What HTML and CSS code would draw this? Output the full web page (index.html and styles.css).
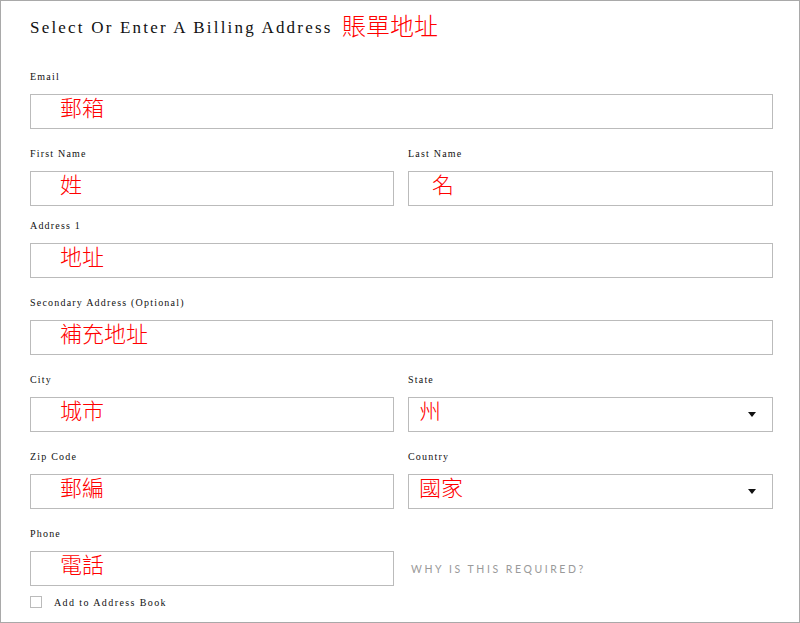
FILE: index.html
```html
<!DOCTYPE html>
<html lang="en">
<head>
    <meta charset="UTF-8">
    <meta name="viewport" content="width=device-width, initial-scale=1.0">
    <title>Billing Address</title>
    <link rel="stylesheet" href="styles.css">
</head>
<body>

<div class="page">
    <h2 class="title">Select Or Enter A Billing Address <span class="note note-title">賬單地址</span></h2>

    <!-- Billing address form -->
    <div class="field">
        <label>Email</label>
        <div class="box"><span class="note">郵箱</span></div>
    </div>

    <div class="row row-tight">
        <div class="field">
            <label>First Name</label>
            <div class="box"><span class="note">姓</span></div>
        </div>
        <div class="field">
            <label>Last Name</label>
            <div class="box box-last"><span class="note">名</span></div>
        </div>
    </div>

    <div class="field">
        <label>Address 1</label>
        <div class="box"><span class="note">地址</span></div>
    </div>

    <div class="field">
        <label>Secondary Address (Optional)</label>
        <div class="box"><span class="note">補充地址</span></div>
    </div>

    <div class="row">
        <div class="field">
            <label>City</label>
            <div class="box"><span class="note">城市</span></div>
        </div>
        <div class="field">
            <label>State</label>
            <div class="box box-select"><span class="note">州</span><span class="arrow"></span></div>
        </div>
    </div>

    <div class="row">
        <div class="field">
            <label>Zip Code</label>
            <div class="box"><span class="note">郵編</span></div>
        </div>
        <div class="field">
            <label>Country</label>
            <div class="box box-select"><span class="note">國家</span><span class="arrow"></span></div>
        </div>
    </div>

    <div class="row row-last">
        <div class="field">
            <label>Phone</label>
            <div class="box"><span class="note">電話</span></div>
        </div>
        <div class="why">WHY IS THIS REQUIRED?</div>
    </div>

    <div class="check-row">
        <span class="checkbox"></span>
        <span class="check-label">Add to Address Book</span>
    </div>
</div>

</body>
</html>
```

FILE: styles.css
```css
body {
    margin: 0;
    background-color: white;
    font-family: "Liberation Serif", "Times New Roman", serif;
    color: #111;
}

.page {
    height: 623px;
    box-sizing: border-box;
    border: 1px solid #a9a9a9;
    padding: 0 26px 0 29px;
}

.title {
    margin: 10px 0 35px;
    height: 24px;
    line-height: 24px;
    font-size: 17px;
    font-weight: normal;
    letter-spacing: 2.2px;
    white-space: nowrap;
}

.note {
    font-family: "Noto Sans CJK TC", sans-serif;
    font-weight: 300;
    color: #ff0000;
    font-size: 22px;
    letter-spacing: 0;
    line-height: 1;
}

.note-title {
    font-size: 24px;
    margin-left: 3px;
    position: relative;
    top: 2px;
}

.field {
    margin-bottom: 18px;
}

.field label {
    display: block;
    font-size: 10px;
    line-height: 14px;
    letter-spacing: 1.2px;
    margin-bottom: 10px;
}

.row {
    display: grid;
    grid-template-columns: 364px 1fr;
    column-gap: 14px;
}

.row-tight .field {
    margin-bottom: 13px;
}

.row-last .field {
    margin-bottom: 10px;
}

.box {
    height: 35px;
    box-sizing: border-box;
    border: 1px solid #bbbbbb;
    display: flex;
    align-items: center;
    padding: 0 0 11px 29px;
}

.box-last {
    padding-left: 23px;
}

.box-select {
    padding-left: 10px;
    padding-right: 16px;
    justify-content: space-between;
}

.arrow {
    width: 0;
    height: 0;
    border-left: 4px solid transparent;
    border-right: 4px solid transparent;
    border-top: 5px solid #111;
    margin-top: 11px;
}

.why {
    align-self: end;
    height: 35px;
    display: flex;
    align-items: center;
    padding-left: 3px;
    margin-bottom: 10px;
    font-family: Lato, "Liberation Sans", sans-serif;
    font-size: 10.5px;
    letter-spacing: 2.55px;
    color: #9a9a9a;
}

.check-row {
    display: flex;
    align-items: center;
}

.checkbox {
    width: 12px;
    height: 12px;
    box-sizing: border-box;
    border: 1px solid #bbbbbb;
    margin-right: 12px;
}

.check-label {
    font-size: 10px;
    letter-spacing: 1.4px;
}
```
